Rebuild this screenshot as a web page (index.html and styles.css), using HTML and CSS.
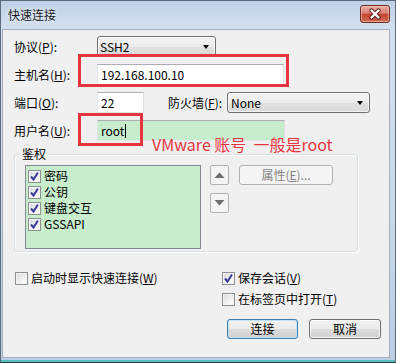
FILE: index.html
```html
<!DOCTYPE html>
<html lang="zh-CN">
<head>
<meta charset="utf-8">
<title>快速连接</title>
<link rel="stylesheet" href="styles.css">
</head>
<body>
<div class="window">
  <div class="titlebar">
    <span class="title">快速连接</span>
    <div class="close-btn">
      <svg width="16" height="12" viewBox="0 0 16 12"><path d="M4.5 2.5 L11.5 9.5 M11.5 2.5 L4.5 9.5" stroke="#5a1d14" stroke-width="4.2" stroke-linecap="round"/><path d="M4.5 2.5 L11.5 9.5 M11.5 2.5 L4.5 9.5" stroke="#ffffff" stroke-width="2.4" stroke-linecap="round"/></svg>
    </div>
  </div>
  <div class="client">
    <div class="row">
      <span class="lbl">协议(<u>P</u>):</span>
      <div class="combo combo-proto"><span>SSH2</span><span class="arrow"></span></div>
    </div>
    <div class="row">
      <span class="lbl">主机名(<u>H</u>):</span>
      <div class="field field-host">192.168.100.10</div>
    </div>
    <div class="row">
      <span class="lbl">端口(<u>O</u>):</span>
      <div class="field field-port">22</div>
      <span class="lbl-fw">防火墙(<u>F</u>):</span>
      <div class="combo combo-fw"><span>None</span><span class="arrow"></span></div>
    </div>
    <div class="row">
      <span class="lbl">用户名(<u>U</u>):</span>
      <div class="field field-user">root<span class="caret"></span></div>
    </div>
    <div class="group">
      <span class="legend">鉴权</span>
      <div class="list">
        <div class="item"><span class="cb"><svg width="11" height="11" viewBox="0 0 11 11"><path d="M2 5.5 L4.5 8.5 L9 1.5" fill="none" stroke="#3b3b9a" stroke-width="2"/></svg></span>密码</div>
        <div class="item"><span class="cb"><svg width="11" height="11" viewBox="0 0 11 11"><path d="M2 5.5 L4.5 8.5 L9 1.5" fill="none" stroke="#3b3b9a" stroke-width="2"/></svg></span>公钥</div>
        <div class="item"><span class="cb"><svg width="11" height="11" viewBox="0 0 11 11"><path d="M2 5.5 L4.5 8.5 L9 1.5" fill="none" stroke="#3b3b9a" stroke-width="2"/></svg></span>键盘交互</div>
        <div class="item"><span class="cb"><svg width="11" height="11" viewBox="0 0 11 11"><path d="M2 5.5 L4.5 8.5 L9 1.5" fill="none" stroke="#3b3b9a" stroke-width="2"/></svg></span>GSSAPI</div>
      </div>
      <div class="updown">
        <div class="sbtn"><svg width="11" height="6" viewBox="0 0 11 6"><path d="M0.5 6 L5.5 0.5 L10.5 6 Z" fill="#6e6e6e"/></svg></div>
        <div class="sbtn"><svg width="11" height="6" viewBox="0 0 11 6"><path d="M0.5 0 L5.5 5.5 L10.5 0 Z" fill="#6e6e6e"/></svg></div>
      </div>
      <div class="btn btn-disabled btn-props">属性(<u>E</u>)...</div>
    </div>
    <div class="opts">
      <div class="opt-left">
        <div class="chk"><span class="cb"></span>启动时显示快速连接(<u>W</u>)</div>
      </div>
      <div class="opt-right">
        <div class="chk"><span class="cb"><svg width="11" height="11" viewBox="0 0 11 11"><path d="M2 5.5 L4.5 8.5 L9 1.5" fill="none" stroke="#3b3b9a" stroke-width="2"/></svg></span>保存会话(<u>V</u>)</div>
        <div class="chk"><span class="cb"></span>在标签页中打开(<u>T</u>)</div>
      </div>
    </div>
    <div class="buttons">
      <div class="btn btn-default">连接</div>
      <div class="btn">取消</div>
    </div>
  </div>
  <div class="mark mark-host"></div>
  <div class="mark mark-user"></div>
  <div class="note">VMware 账号  一般是root</div>
</div>
</body>
</html>
```
FILE: styles.css
```css
* { box-sizing: border-box; }
html, body { margin: 0; padding: 0; background: #ffffff; }
body {
  font-family: "Noto Sans CJK SC", "Noto Sans", sans-serif;
  font-size: 12px;
  line-height: 16px;
  color: #000;
}
u { text-decoration: underline; text-underline-offset: 1px; }

.window {
  position: relative;
  width: 396px;
  height: 363px;
  border: 1px solid #5d6b78;
  border-bottom-color: #2f3b40;
  padding: 0 5px 4px 1px;
  background: linear-gradient(#bfd1e8, #d3e0ef 28px, #c9d9ea 60%, #b9cfe4);
  display: flex;
  flex-direction: column;
  box-shadow: inset 0 -2px 0 #58bfc0;
}

.titlebar {
  height: 28px;
  display: flex;
  align-items: flex-start;
  justify-content: space-between;
}
.title {
  padding-left: 6px;
  line-height: 28px;
  font-size: 12px;
  color: #1a1a1a;
  text-shadow: 0 0 4px rgba(255,255,255,0.9);
}
.close-btn {
  margin-top: 4px;
  width: 30px;
  height: 18px;
  border: 1px solid #6d2b22;
  border-radius: 3px;
  background: linear-gradient(#e9aca3, #d98174 45%, #c44431 52%, #cf6a52);
  box-shadow: inset 0 0 0 1px rgba(255,220,210,0.5);
  display: flex;
  align-items: center;
  justify-content: center;
}

.client {
  flex: 1;
  background: #f0f0f0;
  border: 1px solid #9fb0c2;
  padding: 6px 8px 0 11px;
}

.row {
  display: flex;
  align-items: center;
  height: 21px;
  margin-bottom: 7px;
}
.lbl { width: 83px; }
.lbl-fw { margin-left: 24px; width: 59px; }

.field {
  height: 21px;
  background: #fff;
  border: 1px solid;
  border-color: #abadb3 #dbdfe6 #e3e9ef #e2e3ea;
  padding: 0 3px;
  line-height: 19px;
  display: flex;
  align-items: center;
}
.field-host { width: 187px; }
.field-port { width: 47px; }
.field-user { width: 188px; background: #c7edcc; }
.caret {
  display: inline-block;
  width: 1px;
  height: 14px;
  background: #000;
  margin-left: 1px;
}

.combo {
  height: 21px;
  border: 1px solid #707070;
  border-radius: 3px;
  background: linear-gradient(#f4f4f4, #ececec 50%, #e2e2e2 51%, #d8d8d8);
  box-shadow: inset 0 0 0 1px rgba(255,255,255,0.7);
  display: flex;
  align-items: center;
  justify-content: space-between;
  padding: 0 4px 0 2px;
}
.combo-proto { width: 119px; }
.combo-fw { width: 143px; padding-left: 3px; }
.arrow {
  width: 0;
  height: 0;
  border-left: 3.5px solid transparent;
  border-right: 3.5px solid transparent;
  border-top: 4px solid #000;
  margin-right: 2px;
}

.group {
  position: relative;
  margin-top: 13px;
  width: 344px;
  border: 1px solid #d5dfe5;
  border-radius: 3px;
  box-shadow: 1px 1px 0 #fff, inset 1px 1px 0 #fff;
  padding: 10px 0 2px 10px;
  display: flex;
  align-items: flex-start;
}
.legend {
  position: absolute;
  top: -9px;
  left: 5px;
  padding: 0 2px;
  background: #f0f0f0;
}
.list {
  width: 176px;
  height: 84px;
  background: #c7edcc;
  border: 1px solid #828790;
  padding: 2px 0 0 1px;
}
.item {
  height: 16px;
  display: flex;
  align-items: center;
}
.cb {
  width: 13px;
  height: 13px;
  border: 1px solid #8e8f8f;
  background: linear-gradient(135deg, #dadada, #f6f6f6 70%, #ffffff);
  box-shadow: inset 0 0 0 1px #f4f4f4;
  margin: 0 3px 0 1px;
  display: flex;
  align-items: center;
  justify-content: center;
  flex: none;
}
.updown {
  margin-left: 9px;
  display: flex;
  flex-direction: column;
  gap: 8px;
}
.sbtn {
  width: 19px;
  height: 20px;
  border: 1px solid #adb2b5;
  border-radius: 2px;
  background: #f4f4f4;
  display: flex;
  align-items: center;
  justify-content: center;
}

.btn {
  height: 20px;
  border: 1px solid #707070;
  border-radius: 3px;
  background: linear-gradient(#f2f2f2, #ebebeb 50%, #dddddd 51%, #cfcfcf);
  box-shadow: inset 0 0 0 1px rgba(255,255,255,0.8);
  display: flex;
  align-items: center;
  justify-content: center;
  width: 72px;
}
.btn-props {
  margin-left: 10px;
  width: 94px;
}
.btn-disabled {
  border-color: #adb2b5;
  background: #f4f4f4;
  box-shadow: none;
  color: #838383;
}
.btn-default {
  border-color: #3c7fb1;
  box-shadow: inset 0 0 0 1px #bfe3f8;
  width: 71px;
}

.opts {
  display: flex;
  margin-top: 18px;
}
.opt-left { width: 208px; padding-left: 1px; }
.opt-right {
  display: flex;
  flex-direction: column;
  gap: 5px;
}
.chk {
  height: 16px;
  display: flex;
  align-items: center;
}
.chk .cb { margin-left: 0; }

.buttons {
  display: flex;
  justify-content: flex-end;
  gap: 11px;
  margin-top: 12px;
}

.mark {
  position: absolute;
  border: 3px solid #e8353d;
}
.mark-host { left: 77px; top: 53px; width: 211px; height: 33px; }
.mark-user { left: 77px; top: 112px; width: 65px; height: 33px; }
.note {
  position: absolute;
  left: 151px;
  top: 135px;
  font-size: 16px;
  line-height: 17px;
  color: #e8353d;
  white-space: pre;
}
```
